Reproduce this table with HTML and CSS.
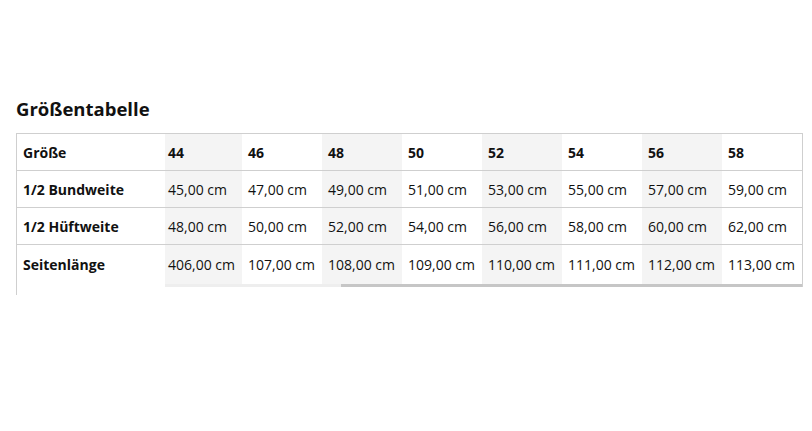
FILE: index.html
```html
<!DOCTYPE html>
<html lang="de">
<head>
<meta charset="utf-8">
<link rel="stylesheet" href="styles.css">
</head>
<body>
<section class="size-chart">
  <h2 class="title">Größentabelle</h2>
  <div class="chart">
    <div class="labels">
      <div class="cell label">Größe</div>
      <div class="cell label">1/2 Bundweite</div>
      <div class="cell label">1/2 Hüftweite</div>
      <div class="cell label last">Seitenlänge</div>
    </div>
    <div class="scroll">
      <div class="cols">
        <div class="col alt first">
          <div class="cell head">44</div><div class="cell">45,00 cm</div><div class="cell">48,00 cm</div><div class="cell last">406,00 cm</div>
        </div>
        <div class="col">
          <div class="cell head">46</div><div class="cell">47,00 cm</div><div class="cell">50,00 cm</div><div class="cell last">107,00 cm</div>
        </div>
        <div class="col alt">
          <div class="cell head">48</div><div class="cell">49,00 cm</div><div class="cell">52,00 cm</div><div class="cell last">108,00 cm</div>
        </div>
        <div class="col">
          <div class="cell head">50</div><div class="cell">51,00 cm</div><div class="cell">54,00 cm</div><div class="cell last">109,00 cm</div>
        </div>
        <div class="col alt">
          <div class="cell head">52</div><div class="cell">53,00 cm</div><div class="cell">56,00 cm</div><div class="cell last">110,00 cm</div>
        </div>
        <div class="col">
          <div class="cell head">54</div><div class="cell">55,00 cm</div><div class="cell">58,00 cm</div><div class="cell last">111,00 cm</div>
        </div>
        <div class="col alt">
          <div class="cell head">56</div><div class="cell">57,00 cm</div><div class="cell">60,00 cm</div><div class="cell last">112,00 cm</div>
        </div>
        <div class="col">
          <div class="cell head">58</div><div class="cell">59,00 cm</div><div class="cell">62,00 cm</div><div class="cell last">113,00 cm</div>
        </div>
      </div>
      <div class="scrollbar">
        <div class="track"></div>
        <div class="thumb"></div>
      </div>
    </div>
  </div>
</section>
</body>
</html>
```

FILE: styles.css
```css
* { box-sizing: border-box; }

body {
  margin: 0;
  background: #fff;
  font-family: "Open Sans", "Liberation Sans", sans-serif;
  color: #111;
}

.size-chart {
  padding: 95px 0 0 16px;
}

.title {
  margin: 0 0 11px;
  font-size: 18.5px;
  line-height: 27px;
  font-weight: 700;
  color: #111;
}

.chart {
  display: flex;
  width: 787px;
  border-top: 1px solid #cfcfcf;
  border-left: 1px solid #cfcfcf;
}

.labels {
  width: 148px;
  flex: none;
  padding-bottom: 11px;
}

.cell {
  height: 37px;
  border-bottom: 1px solid #cfcfcf;
  display: flex;
  align-items: center;
  font-size: 14px;
  padding-left: 6px;
  white-space: nowrap;
}

.cell.last {
  height: 39px;
  border-bottom: none;
}

.label {
  font-weight: 700;
}

.head {
  font-weight: 700;
}

.scroll {
  flex: 1;
  border-right: 1px solid #cfcfcf;
  align-self: flex-start;
}

.cols {
  display: flex;
}

.col {
  width: 80px;
  flex: none;
}

.col.first {
  width: 77px;
}

.col.first .cell {
  padding-left: 3px;
}

.col.alt {
  background: #f4f4f4;
}

.scrollbar {
  display: flex;
  height: 3px;
}

.track {
  width: 176px;
  background: #eeeeee;
}

.thumb {
  flex: 1;
  background: #c6c6c6;
}
```
